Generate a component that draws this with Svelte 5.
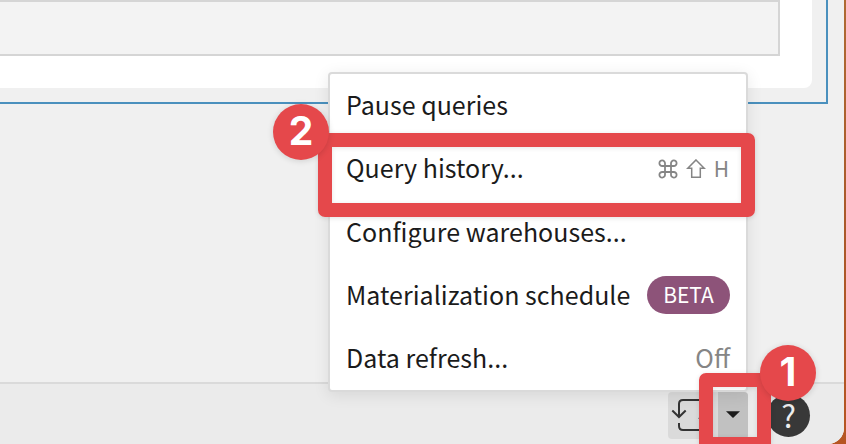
<script>
  const items = [
    { label: 'Pause queries' },
    { label: 'Query history...', shortcut: true },
    { label: 'Configure warehouses...' },
    { label: 'Materialization schedule', badge: 'BETA' },
    { label: 'Data refresh...', value: 'Off' }
  ];
</script>

<div class="desktop">
  <div class="window">
    <main>
      <div class="selection">
        <div class="card"><div class="field"></div></div>
      </div>
    </main>
    <footer>
      <div class="split">
        <div class="refresh">
          <svg width="50" height="47" viewBox="0 0 50 47" fill="none" stroke="#333" stroke-width="2">
            <path d="M34 8H15q-4 0-4 4v12.5M4.3 18.5l6.7 6.5 6.7-6.5M11 31v3q0 4 4 4h19M31 27l6-6 7 6" />
          </svg>
        </div>
        <div class="caret">
          <svg width="14" height="7" viewBox="0 0 14 7"><path d="M0 .3h14L7 7z" fill="#1b1b1b" /></svg>
        </div>
      </div>
      <div class="help"><span>?</span></div>
    </footer>
  </div>

  <div class="menu">
    {#each items as item}
      <div class="item">
        <span class="label">{item.label}</span>
        {#if item.shortcut}
          <span class="keys">
            <svg width="20" height="20" viewBox="0 0 20 20" fill="none" stroke="#858585" stroke-width="1.8">
              <path d="M7 7H4.3A2.8 2.8 0 1 1 7 4.3V15.7A2.8 2.8 0 1 1 4.3 13H15.7A2.8 2.8 0 1 1 13 15.7V4.3A2.8 2.8 0 1 1 15.7 7Z" />
            </svg>
            <svg width="20" height="20" viewBox="0 0 20 20" fill="none" stroke="#858585" stroke-width="1.5">
              <path d="M10 .9 18.2 9.3H14.3V18.2H5.7V9.3H1.8Z" />
            </svg>
            <span>H</span>
          </span>
        {/if}
        {#if item.badge}<span class="beta">{item.badge}</span>{/if}
        {#if item.value}<span class="value">{item.value}</span>{/if}
      </div>
    {/each}
  </div>

  <div class="frame history"></div>
  <div class="frame opener"></div>
  <div class="step two">2</div>
  <div class="step one">1</div>
</div>

<style>
  .desktop {
    position: relative;
    width: 846px;
    height: 444px;
    overflow: hidden;
    background: linear-gradient(#ae6a33, #a9592a 50%, #b65522);
    font-family: "Noto Sans CJK SC", "Noto Sans", sans-serif;
    color: #1b1b1b;
  }
  .window {
    width: 844px;
    height: 444px;
    display: flex;
    flex-direction: column;
    background: #f0f0f0;
    border-bottom-right-radius: 16px;
    overflow: hidden;
  }
  main { flex: 1; }
  .selection {
    box-sizing: border-box;
    width: 828px;
    height: 104px;
    border-right: 2px solid #4a90bd;
    border-bottom: 2px solid #4a90bd;
  }
  .card {
    width: 812px;
    height: 88px;
    background: #fff;
    border-bottom-right-radius: 8px;
  }
  .field {
    box-sizing: border-box;
    width: 780px;
    height: 56px;
    background: #f3f3f3;
    border: 2px solid #d5d5d5;
    border-left: 0;
  }
  footer {
    box-sizing: border-box;
    height: 62px;
    border-top: 2px solid #dadada;
    background: #ebebeb;
    display: flex;
    align-items: flex-start;
    padding: 8px 0 0 668px;
    gap: 19px;
  }
  .split {
    display: flex;
    width: 80px;
    height: 47px;
    border-radius: 4px;
    overflow: hidden;
    background: #dadada;
  }
  .refresh { width: 50px; }
  .caret {
    width: 30px;
    background: #c1c1c1;
    display: flex;
    align-items: center;
    justify-content: center;
    padding-bottom: 2px;
    box-sizing: border-box;
  }
  .help {
    width: 43px;
    height: 43px;
    margin-top: 2px;
    border-radius: 50%;
    background: #383838;
    color: #ededed;
    font-size: 31px;
    line-height: 41px;
    text-align: center;
  }
  .menu {
    position: absolute;
    left: 328px;
    top: 72px;
    box-sizing: border-box;
    width: 420px;
    height: 320px;
    border: 2px solid #dadada;
    border-radius: 4px;
    background: #fff;
    box-shadow: 0 3px 16px rgba(0, 0, 0, .09);
    padding: 0 16px;
    display: flex;
    flex-direction: column;
  }
  .item {
    flex: 1;
    display: flex;
    align-items: center;
    justify-content: space-between;
    font-size: 25px;
    line-height: 36px;
    white-space: nowrap;
  }
  .label, .value { padding-bottom: 3px; }
  .label { letter-spacing: .02px; }
  .keys {
    display: flex;
    align-items: center;
    gap: 8px;
    padding-right: 1px;
    color: #858585;
    font-size: 21px;
    line-height: 36px;
  }
  .keys span { padding-bottom: 2px; }
  .beta {
    box-sizing: border-box;
    width: 83px;
    height: 38px;
    border-radius: 19px;
    background: #8d5379;
    color: #fff;
    font-size: 21px;
    line-height: 37px;
    text-align: center;
  }
  .value { color: #858585; }
  .frame {
    position: absolute;
    box-sizing: border-box;
    border: 14px solid #e5484b;
    border-radius: 7px;
    box-shadow: 0 1px 5px rgba(0, 0, 0, .12), inset 0 1px 5px rgba(0, 0, 0, .1);
  }
  .history { left: 318px; top: 133px; width: 437px; height: 84px; }
  .opener { left: 699px; top: 373px; width: 72px; height: 78px; }
  .opener::after {
    content: "";
    position: absolute;
    inset: auto 0 0 0;
  }
  .step {
    position: absolute;
    width: 56px;
    height: 56px;
    border-radius: 50%;
    background: #e5484b;
    color: #fff;
    font: bold 39px/53px Inter, sans-serif;
    text-align: center;
    box-shadow: 0 1px 6px rgba(0, 0, 0, .14);
  }
  .two { left: 273px; top: 104px; }
  .one { left: 760px; top: 345px; }
</style>
